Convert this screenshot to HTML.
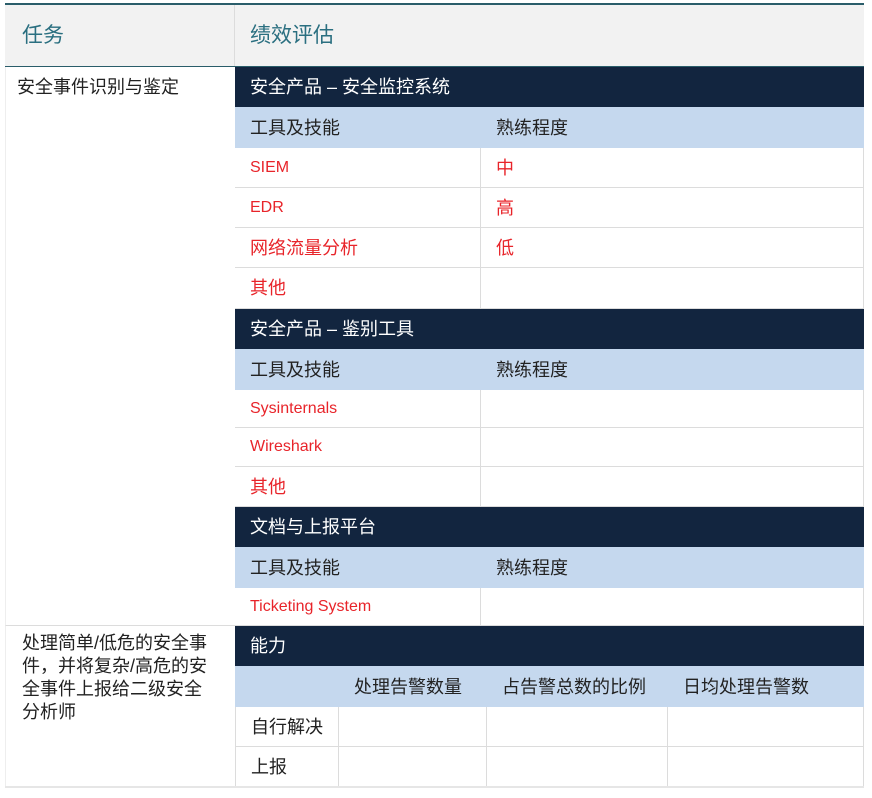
<!DOCTYPE html>
<html><head><meta charset="utf-8"><style>
body{margin:0;width:872px;height:798px;background:#fff;font-family:"Liberation Sans","Noto Sans CJK SC",sans-serif;position:relative;overflow:hidden}
div.a{position:absolute;box-sizing:border-box;font-size:18px;line-height:20px;color:#222;display:flex;align-items:center;padding-left:15px;white-space:nowrap}
.d{background:#12253f;color:#fff!important}
.b{background:#c5d8ee}
.r{color:#e8242a!important}
.l{font-size:16px!important}
.w{border-bottom:1px solid #dcdcdc;border-right:1px solid #dcdcdc}
</style></head><body>
<div style="position:absolute;left:5px;top:3px;width:859px;height:2px;background:#2a5d6a"></div>
<div class="a" style="left:5px;top:5px;width:230px;height:61px;background:#f2f2f2;font-size:21px;color:#2a6f80;border-right:1px solid #dcdcdc;padding-left:17px">任务</div>
<div class="a" style="left:235px;top:5px;width:629px;height:61px;background:#f2f2f2;font-size:21px;color:#2a6f80">绩效评估</div>
<div style="position:absolute;left:5px;top:66px;width:859px;height:1px;background:#2a5d6a"></div>
<div style="position:absolute;left:5px;top:67px;width:230px;height:559px;border-bottom:1px solid #dcdcdc;border-left:1px solid #eee;box-sizing:border-box;padding:9px 0 0 11px;font-size:18px;line-height:22px;color:#222">安全事件识别与鉴定</div>
<div style="position:absolute;left:5px;top:626px;width:230px;height:161px;border-left:1px solid #eee;box-sizing:border-box;padding:6px 22px 0 16px;font-size:18px;line-height:23px;color:#222">处理简单/低危的安全事件，并将复杂/高危的安全事件上报给二级安全分析师</div>

<div class="a d" style="left:235px;top:67px;width:629px;height:40px">安全产品 – 安全监控系统</div>
<div class="a b" style="left:235px;top:107px;width:246px;height:41px">工具及技能</div>
<div class="a b" style="left:481px;top:107px;width:383px;height:41px">熟练程度</div>
<div class="a w r l" style="left:235px;top:148px;width:246px;height:40px">SIEM</div>
<div class="a w r" style="left:481px;top:148px;width:383px;height:40px">中</div>
<div class="a w r l" style="left:235px;top:188px;width:246px;height:40px">EDR</div>
<div class="a w r" style="left:481px;top:188px;width:383px;height:40px">高</div>
<div class="a w r" style="left:235px;top:228px;width:246px;height:40px">网络流量分析</div>
<div class="a w r" style="left:481px;top:228px;width:383px;height:40px">低</div>
<div class="a w r" style="left:235px;top:268px;width:246px;height:41px">其他</div>
<div class="a w" style="left:481px;top:268px;width:383px;height:41px"></div>

<div class="a d" style="left:235px;top:309px;width:629px;height:40px">安全产品 – 鉴别工具</div>
<div class="a b" style="left:235px;top:349px;width:246px;height:41px">工具及技能</div>
<div class="a b" style="left:481px;top:349px;width:383px;height:41px">熟练程度</div>
<div class="a w r l" style="left:235px;top:390px;width:246px;height:38px">Sysinternals</div>
<div class="a w" style="left:481px;top:390px;width:383px;height:38px"></div>
<div class="a w r l" style="left:235px;top:428px;width:246px;height:39px">Wireshark</div>
<div class="a w" style="left:481px;top:428px;width:383px;height:39px"></div>
<div class="a w r" style="left:235px;top:467px;width:246px;height:40px">其他</div>
<div class="a w" style="left:481px;top:467px;width:383px;height:40px"></div>

<div class="a d" style="left:235px;top:507px;width:629px;height:40px">文档与上报平台</div>
<div class="a b" style="left:235px;top:547px;width:246px;height:41px">工具及技能</div>
<div class="a b" style="left:481px;top:547px;width:383px;height:41px">熟练程度</div>
<div class="a w r l" style="left:235px;top:588px;width:246px;height:38px">Ticketing System</div>
<div class="a w" style="left:481px;top:588px;width:383px;height:38px"></div>

<div class="a d" style="left:235px;top:626px;width:629px;height:40px">能力</div>
<div class="a b" style="left:235px;top:666px;width:104px;height:41px"></div>
<div class="a b" style="left:339px;top:666px;width:148px;height:41px">处理告警数量</div>
<div class="a b" style="left:487px;top:666px;width:181px;height:41px">占告警总数的比例</div>
<div class="a b" style="left:668px;top:666px;width:196px;height:41px">日均处理告警数</div>
<div class="a w" style="left:235px;top:707px;width:104px;height:40px;border-left:1px solid #dcdcdc">自行解决</div>
<div class="a w" style="left:339px;top:707px;width:148px;height:40px"></div>
<div class="a w" style="left:487px;top:707px;width:181px;height:40px"></div>
<div class="a w" style="left:668px;top:707px;width:196px;height:40px"></div>
<div class="a w" style="left:235px;top:747px;width:104px;height:40px;border-left:1px solid #dcdcdc">上报</div>
<div class="a w" style="left:339px;top:747px;width:148px;height:40px"></div>
<div class="a w" style="left:487px;top:747px;width:181px;height:40px"></div>
<div class="a w" style="left:668px;top:747px;width:196px;height:40px"></div>
<div style="position:absolute;left:5px;top:786px;width:859px;height:2px;background:#e6e6e6"></div>
</body></html>
